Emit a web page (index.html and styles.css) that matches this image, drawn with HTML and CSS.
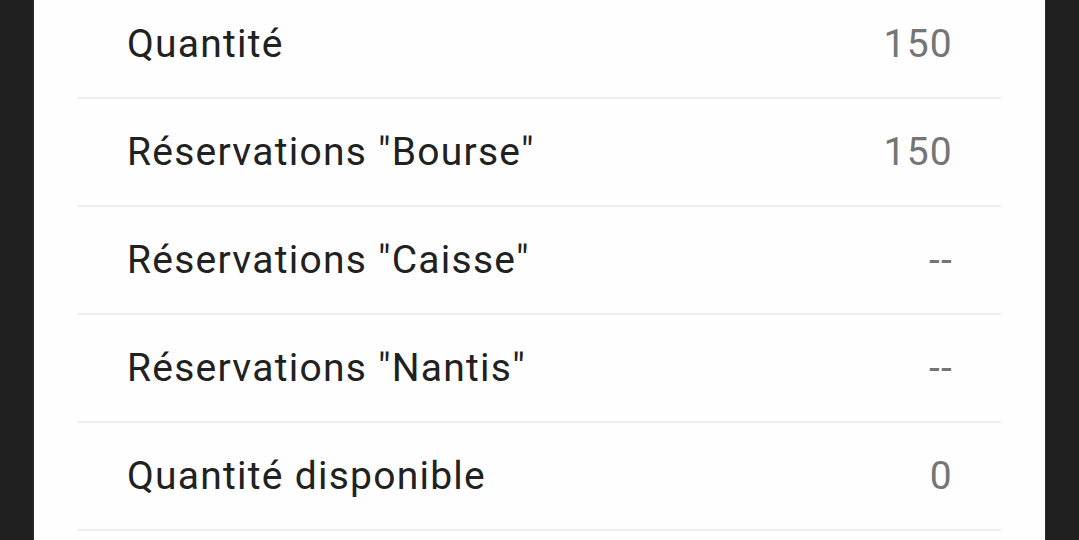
FILE: index.html
```html
<!DOCTYPE html>
<html lang="fr">
<head>
<meta charset="utf-8">
<link rel="stylesheet" href="styles.css">
</head>
<body>
<div class="card">
  <ul class="list">
    <li class="row"><span class="label">Quantité</span><span class="value">150</span></li>
    <li class="row"><span class="label">Réservations "Bourse"</span><span class="value">150</span></li>
    <li class="row"><span class="label">Réservations "Caisse"</span><span class="value">--</span></li>
    <li class="row"><span class="label">Réservations "Nantis"</span><span class="value">--</span></li>
    <li class="row"><span class="label">Quantité disponible</span><span class="value">0</span></li>
  </ul>
</div>
</body>
</html>
```

FILE: styles.css
```css
html, body {
  margin: 0;
  padding: 0;
  height: 100%;
  overflow: hidden;
  background: #1f201f;
}
.card {
  margin: 0 33px;
  background: #fefefe;
  height: 100%;
  border-left: 1px solid #2a2b2a;
  border-right: 1px solid #2a2b2a;
  box-sizing: border-box;
  overflow: hidden;
}
.list {
  list-style: none;
  margin: -9px 44px 0;
  padding: 0;
}
.row {
  display: flex;
  align-items: center;
  justify-content: space-between;
  height: 106px;
  padding: 0 48px 0 49px;
  border-bottom: 2px solid #eeeeee;
  font-family: Roboto, "Liberation Sans", sans-serif;
  font-size: 39px;
  letter-spacing: 1.25px;
}
.label {
  color: #212121;
}
.value {
  color: #757575;
}
```
